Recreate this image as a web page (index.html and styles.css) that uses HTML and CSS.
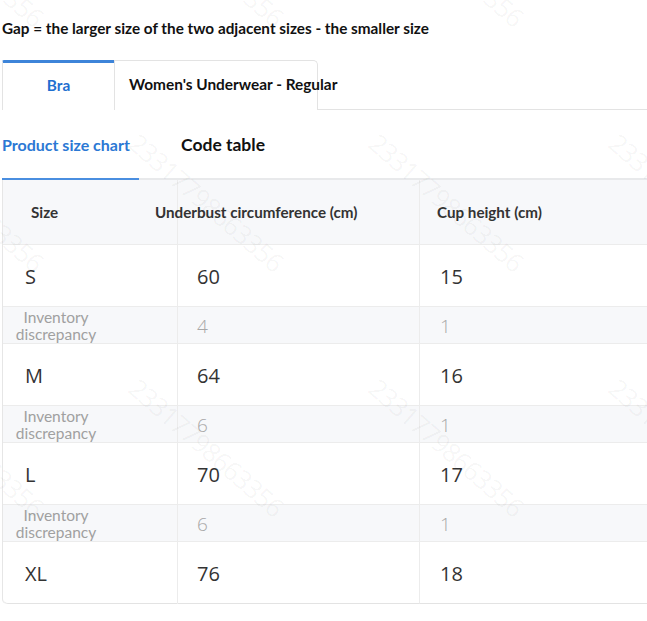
FILE: index.html
```html
<!DOCTYPE html>
<html>
<head>
<meta charset="utf-8">
<link rel="stylesheet" href="styles.css">
</head>
<body>
<div class="page">
  <div class="title">Gap = the larger size of the two adjacent sizes - the smaller size</div>

  <div class="tabs">
    <div class="tab active">Bra</div>
    <div class="tab second">Women's Underwear - Regular</div>
  </div>

  <div class="subtabs">
    <div class="subtab active">Product size chart</div>
    <div class="subtab code">Code table</div>
  </div>

  <div class="table">
    <div class="th c1"><span>Size</span></div>
    <div class="th c2"><span class="shift">Underbust circumference (cm)</span></div>
    <div class="th c3"><span>Cup height (cm)</span></div>

    <div class="td c1">S</div>
    <div class="td c2">60</div>
    <div class="td c3">15</div>
    <div class="td diff c1"><span class="inv">Inventory discrepancy</span></div>
    <div class="td diff c2">4</div>
    <div class="td diff c3">1</div>

    <div class="td c1">M</div>
    <div class="td c2">64</div>
    <div class="td c3">16</div>
    <div class="td diff c1"><span class="inv">Inventory discrepancy</span></div>
    <div class="td diff c2">6</div>
    <div class="td diff c3">1</div>

    <div class="td c1">L</div>
    <div class="td c2">70</div>
    <div class="td c3">17</div>
    <div class="td diff c1"><span class="inv">Inventory discrepancy</span></div>
    <div class="td diff c2">6</div>
    <div class="td diff c3">1</div>

    <div class="td c1 last">XL</div>
    <div class="td c2 last">76</div>
    <div class="td c3 last">18</div>
  </div>
</div>

<div class="watermark-clip" aria-hidden="true">
  <div class="watermark">
    <span>23317798663356</span><span>23317798663356</span><span>23317798663356</span><span>23317798663356</span>
    <span>23317798663356</span><span>23317798663356</span><span>23317798663356</span><span>23317798663356</span>
    <span>23317798663356</span><span>23317798663356</span><span>23317798663356</span><span>23317798663356</span>
    <span>23317798663356</span><span>23317798663356</span><span>23317798663356</span><span>23317798663356</span>
  </div>
</div>
</body>
</html>
```

FILE: styles.css
```css
html, body {
  margin: 0;
  padding: 0;
  background: #ffffff;
  overflow: hidden;
}

body {
  width: 647px;
  height: 621px;
  position: relative;
  font-family: Lato, "Open Sans", sans-serif;
  color: #222;
}

.page {
  padding-left: 2px;
}

.title {
  padding-top: 18px;
  line-height: 20px;
  font-size: 15.3px;
  font-weight: 700;
  color: #111;
  white-space: nowrap;
}

.tabs {
  margin-top: 22px;
  display: flex;
  border-bottom: 1px solid #e3e3e3;
  height: 49px;
}

.tab {
  box-sizing: border-box;
  height: 50px;
  display: flex;
  align-items: center;
  padding-bottom: 3px;
  font-size: 15.4px;
  font-weight: 700;
  white-space: nowrap;
  border: 1px solid #e3e3e3;
  border-bottom: none;
  background: #fff;
}

.tab.active {
  width: 112px;
  justify-content: center;
  color: #1f6fd0;
  border-top: 3px solid #3d84d9;
  border-right: none;
  border-radius: 2px 0 0 0;
  padding-bottom: 4px;
}

.tab.second {
  width: 204px;
  padding-left: 14px;
  color: #111;
  border-radius: 0 5px 0 0;
}

.subtabs {
  display: flex;
  height: 68px;
  align-items: stretch;
  border-bottom: 2px solid #e8e9eb;
}

.subtab {
  display: flex;
  align-items: center;
  white-space: nowrap;
}

.subtab.active {
  width: 137px;
  color: #2b78d4;
  font-size: 16px;
  font-weight: 700;
  border-bottom: 2px solid #4a8ee0;
  margin-bottom: -2px;
}

.subtab.code {
  margin-left: 42px;
  font-size: 17.5px;
  font-weight: 700;
  color: #111;
}

.table {
  display: grid;
  grid-template-columns: 175px 242px 1fr;
  grid-template-rows: 65px repeat(3, 62px 37px) 62px;
  border-left: 1px solid #e6e6e6;
  border-radius: 0 0 0 5px;
  box-sizing: border-box;
}

.th, .td {
  display: flex;
  align-items: center;
  border-right: 1px solid #ececec;
  border-bottom: 1px solid #ececec;
  box-sizing: border-box;
  white-space: nowrap;
}

.th.c3, .td.c3 {
  border-right: none;
}

.th {
  background: #f7f8fa;
  font-size: 15.2px;
  font-weight: 700;
  color: #333;
}

.th.c1 { padding-left: 28px; }
.th.c2 { padding-left: 0; }
.th.c3 { padding-left: 17px; }

.shift {
  margin-left: -23px;
}

.td {
  background: #fff;
  font-family: "Open Sans", "Noto Sans", sans-serif;
  font-size: 20px;
  color: #333;
  padding-top: 1px;
}

.td.c1 { padding-left: 22px; }
.td.c2 { padding-left: 19px; }
.td.c3 { padding-left: 20px; }

.td.last.c1 { border-radius: 0 0 0 5px; }
.td.last { border-bottom-color: #e3e3e3; }

.td.diff {
  background: #f7f8fa;
  color: #a8a8a8;
  font-size: 19px;
  font-weight: 300;
}

.td.diff.c1 {
  padding-left: 10px;
}

.inv {
  display: inline-block;
  width: 86px;
  text-align: center;
  white-space: normal;
  font-family: Lato, sans-serif;
  font-size: 15.5px;
  font-weight: 400;
  line-height: 17px;
  color: #a0a0a0;
}

.watermark-clip {
  position: absolute;
  inset: 0;
  overflow: hidden;
  pointer-events: none;
}

.watermark {
  position: absolute;
  left: -95px;
  top: -120px;
  display: grid;
  grid-template-columns: repeat(4, 240px);
  grid-template-rows: repeat(4, 245px);
}

.watermark span {
  display: block;
  width: 240px;
  transform: rotate(41deg);
  transform-origin: 0 0;
  font-family: "Open Sans", sans-serif;
  font-size: 26px;
  letter-spacing: -1px;
  color: rgba(0, 0, 0, 0.045);
  white-space: nowrap;
}
```
